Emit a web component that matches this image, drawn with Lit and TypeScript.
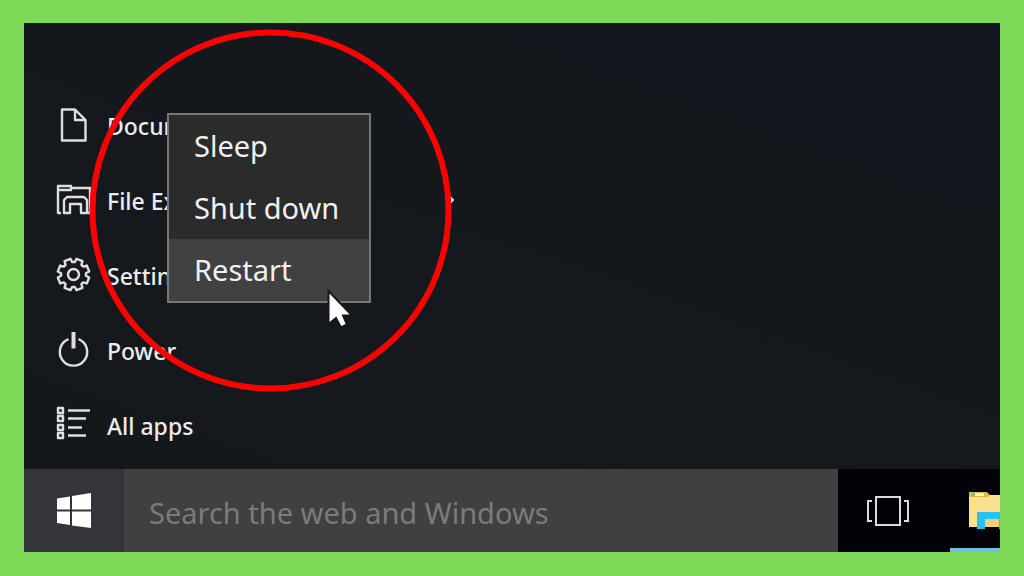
import { LitElement, html, css, svg } from "lit";
import { customElement, state } from "lit/decorators.js";
import { classMap } from "lit/directives/class-map.js";

const gearPath = (() => {
  const teeth = 8;
  const pts: string[] = [];
  for (let i = 0; i < teeth; i++) {
    const base = (i * 2 * Math.PI) / teeth + Math.PI / 8;
    for (const [offset, r] of [[-0.29, 12.5], [-0.2, 16], [0.2, 16], [0.29, 12.5]]) {
      const a = base + offset;
      pts.push(`${(17.5 + r * Math.cos(a)).toFixed(2)} ${(16.5 + r * Math.sin(a)).toFixed(2)}`);
    }
  }
  return `M${pts.join("L")}Z`;
})();

const icons = {
  documents: svg`<path d="M6 1.500h13l10.500 10.500v20.500h-23.500zM19 1.500v10.500h10.500" />`,
  explorer: svg`<path d="M5 30H2V3h13v4H2M15 5h19v25h-3M8 30V17l3-3h17l3 3v13h-6v-9H14v9z" />`,
  settings: svg`<path d=${gearPath} /><circle cx="17.500" cy="16.500" r="5.500" />`,
  power: svg`<path d="M12.500 6.200a13.700 13.700 0 1 0 10 0" /><path class="bold" d="M17.500 -1v16.500" />`,
  apps: svg`
    <path d="M2 0h5v5h-5zM2 8h5v5h-5zM2 17h5v5h-5zM2 25h5v5h-5z" />
    <path d="M12 2.500h22M12 10.500h18M12 19.500h14M12 27.500h18" />`,
};

type IconName = keyof typeof icons;

@customElement("start-list")
export class StartList extends LitElement {
  static styles = css`
    :host { display: block; width: 430px; max-width: 100%; }
    .list { list-style: none; margin: 0; padding: 0 0 6px; }
    .row {
      display: flex; align-items: center; gap: 15px;
      box-sizing: border-box; width: 100%; height: 75px; padding: 0 0 0 32px;
      border: 0; background: none; color: #ececed; text-align: left;
      font: 500 23px/32px "Noto Sans", sans-serif;
    }
    .icon {
      flex: none; width: 36px; height: 35px; overflow: visible;
      fill: none; stroke: #dededf; stroke-width: 2.4; stroke-linejoin: round;
    }
    .bold { stroke-width: 4; }
    .label { flex: 1; white-space: nowrap; }
    .chevron { width: 8px; height: 16px; fill: none; stroke: #e4e4e5; stroke-width: 2; }
  `;

  private entries: { icon: IconName; label: string; more?: boolean }[] = [
    { icon: "documents", label: "Documents" },
    { icon: "explorer", label: "File Explorer", more: true },
    { icon: "settings", label: "Settings" },
    { icon: "power", label: "Power" },
    { icon: "apps", label: "All apps" },
  ];

  render() {
    return html`<ul class="list">
      ${this.entries.map(
        (e) => html`<li>
          <button class="row" type="button">
            <svg class="icon" viewBox="0 0 36 35" aria-hidden="true">${icons[e.icon]}</svg>
            <span class="label">${e.label}</span>
            ${e.more
              ? html`<svg class="chevron" viewBox="0 0 8 16" aria-hidden="true"><path d="M1 1l6 6-6 6" /></svg>`
              : null}
          </button>
        </li>`
      )}
    </ul>`;
  }
}

@customElement("power-menu")
export class PowerMenu extends LitElement {
  static styles = css`
    :host { display: block; box-sizing: border-box; border: 2px solid #777; background: #2b2b2b; }
    .item {
      display: block; width: 100%; height: 62px; padding: 0 25px;
      border: 0; background: none; color: #f1f1f1; text-align: left; white-space: nowrap;
      font: 400 29px/40px "Noto Sans", sans-serif;
    }
    .selected { background: #414141; }
  `;

  @state() private selected = "Restart";

  render() {
    return html`${["Sleep", "Shut down", "Restart"].map(
      (name) => html`<button
        type="button"
        class=${classMap({ item: true, selected: name === this.selected })}
        @mouseenter=${() => (this.selected = name)}
      >${name}</button>`
    )}`;
  }
}

@customElement("task-bar")
export class TaskBar extends LitElement {
  static styles = css`
    :host { display: flex; height: 83px; background: #010308; }
    .start {
      display: flex; align-items: center; justify-content: center;
      flex: none; width: 100px; padding: 0; border: 0; background: #34353a;
    }
    .logo { width: 36px; height: 36px; fill: #fff; }
    .search {
      flex: 1; min-width: 0; box-sizing: border-box; padding: 4px 25px 0; margin: 0;
      border: 0; border-radius: 0; outline: 0; background: #404040; color: #eee;
      font: 400 29px/40px "Noto Sans", sans-serif;
    }
    .search::placeholder { color: #7b7b7b; opacity: 1; }
    .task {
      display: flex; align-items: center; justify-content: center;
      flex: none; width: 100px; padding: 0; border: 0; background: none;
    }
    .view { width: 44px; height: 32px; fill: none; stroke: #dcdcdc; stroke-width: 2; }
    .app {
      display: flex; align-items: center; flex: none; box-sizing: border-box;
      width: 50px; margin-left: 12px; padding: 4px 0 0 18px; overflow: hidden;
      border: 0; border-bottom: 4px solid #76b9ed; background: none;
    }
    .folder { flex: none; width: 48px; height: 40px; }
  `;

  render() {
    return html`
      <button class="start" type="button" aria-label="Start">
        <svg class="logo" viewBox="0 0 36 36">
          <path d="M1 5.500L14 3.500V16.500H1zM16 3L35 0V16.500H16zM1 18.500H14V32L1 30zM16 18.500H35V35L16 32.500z" />
        </svg>
      </button>
      <input class="search" type="text" aria-label="Search" placeholder="Search the web and Windows" />
      <button class="task" type="button" aria-label="Task View">
        <svg class="view" viewBox="0 0 44 32">
          <path d="M10 2h24v28h-24zM6 6h-4v20h4M38 6h4v20h-4" />
        </svg>
      </button>
      <button class="app" type="button" aria-label="File Explorer">
        <svg class="folder" viewBox="0 0 48 40">
          <path fill="#e9b93a" d="M1 1h18l3 3h25v5H1z" />
          <path fill="#fbf3c9" d="M4 2h12v3H4z" />
          <path fill="#5fc2a0" d="M4 2h3v3H4z" />
          <path fill="#fde08d" d="M1 6h19l2-2h25v32H1z" />
          <path fill="#f5cf72" d="M17 28h14v8H17z" />
          <path fill="#27c2f4" d="M9 21h30v17h-8v-10H17v10H9z" />
        </svg>
      </button>`;
  }
}

@customElement("app-root")
export class AppRoot extends LitElement {
  static styles = css`
    :host {
      display: flex; box-sizing: border-box; width: 100%; height: 100vh;
      padding: 23px 24px 24px; background: #7ed957;
    }
    .desktop {
      position: relative; display: flex; flex-direction: column;
      flex: 1; min-width: 0; overflow: hidden;
      background: linear-gradient(200deg, #13161d, #15191d 60%, #14181b);
    }
    .start-area { display: flex; flex: 1; align-items: flex-end; min-height: 0; }
    .popup { position: absolute; left: 143px; bottom: 249px; width: 204px; }
    .ring { position: absolute; left: 65px; bottom: 160px; width: 363px; height: 363px; fill: none; stroke: #fe0000; stroke-width: 6; }
    .pointer { position: absolute; left: 303px; bottom: 223px; width: 28px; height: 40px; }
  `;

  render() {
    return html`<main class="desktop">
      <div class="start-area"><start-list></start-list></div>
      <task-bar></task-bar>
      <power-menu class="popup"></power-menu>
      <svg class="ring" viewBox="0 0 363 363" aria-hidden="true"><circle cx="181.500" cy="181.500" r="178" /></svg>
      <svg class="pointer" viewBox="0 0 28 40" aria-hidden="true">
        <path fill="#fff" stroke="#15161c" stroke-width="2" d="M1.500 2V35L9 29L14 38.500L20 35.500L16 26.500H25z" />
      </svg>
    </main>`;
  }
}
